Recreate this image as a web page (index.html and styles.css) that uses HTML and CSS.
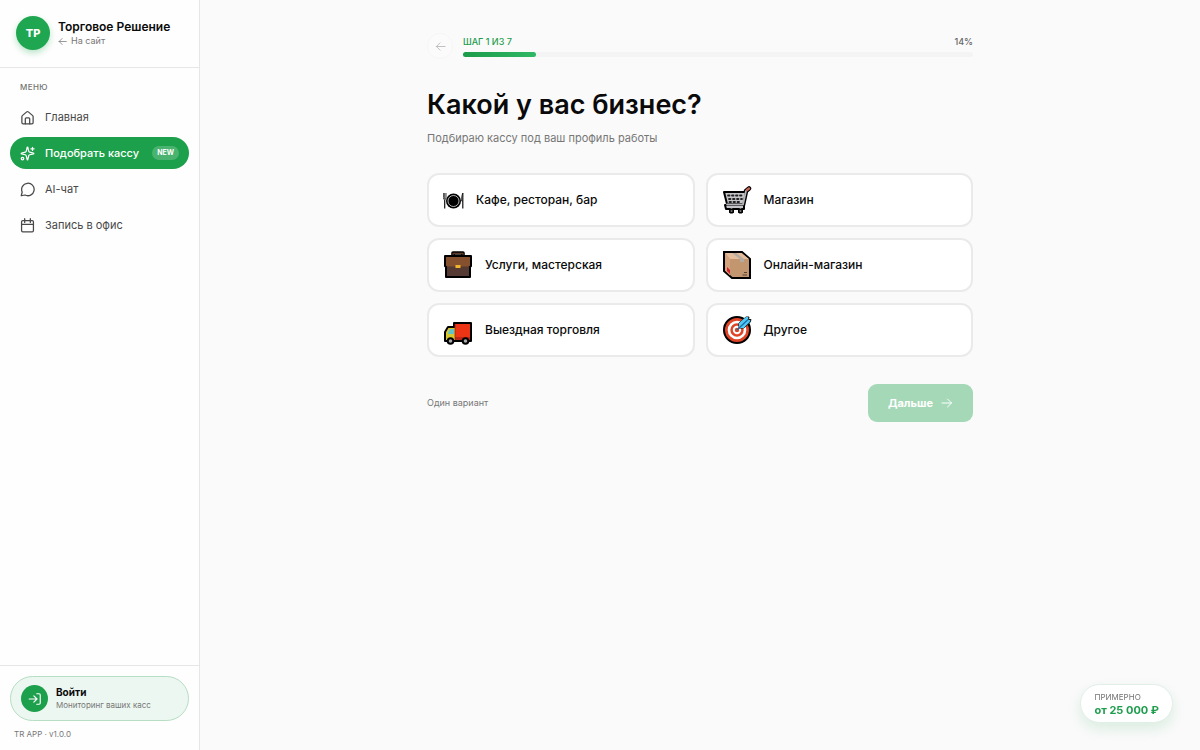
FILE: index.html
```html
<!DOCTYPE html>
<html lang="ru">
  <head>
    <meta charset="UTF-8" />
    <meta name="viewport" content="width=device-width, initial-scale=1" />
    <title>Торговое Решение</title>
    <link rel="stylesheet" href="styles.css">
  </head>
  <body>
    <!-- Боковое меню -->
    <aside class="sidebar">
      <header class="brand">
        <div class="logo">ТР</div>
        <div class="brand-text">
          <strong>Торговое Решение</strong>
          <a href="#">
            <svg class="icon" width="9" height="9" viewBox="0 0 24 24"><path d="M22 12H3M11 4l-8 8 8 8" /></svg>
            На сайт
          </a>
        </div>
      </header>

      <nav class="menu">
        <h2>МЕНЮ</h2>
        <ul>
          <li>
            <a href="#">
              <svg class="icon" width="15" height="15" viewBox="0 0 24 24"><path d="M3 10.5a2 2 0 0 1 .7-1.500l7-6a2 2 0 0 1 2.600 0l7 6a2 2 0 0 1 .7 1.500V20a2 2 0 0 1-2 2H5a2 2 0 0 1-2-2z" /><path d="M8.500 22v-8a1.500 1.500 0 0 1 1.500-1.500h4a1.500 1.500 0 0 1 1.500 1.500v8" /></svg>
              <span>Главная</span>
            </a>
          </li>
          <li>
            <a href="#" class="active" aria-current="page">
              <svg class="icon" width="15" height="15" viewBox="0 0 24 24"><path d="M9.900 15.500A2 2 0 0 0 8.500 14l-6.100-1.500a.5.5 0 0 1 0-1L8.500 9.900a2 2 0 0 0 1.400-1.400l1.600-6.100a.5.5 0 0 1 1 0l1.500 6.100a2 2 0 0 0 1.500 1.400l6.100 1.600a.5.5 0 0 1 0 1L15.500 14a2 2 0 0 0-1.500 1.500l-1.500 6.100a.5.5 0 0 1-1 0z" /><path d="M20 2v5M22.500 4.500h-5" /><circle cx="4" cy="20" r="2" /></svg>
              <span>Подобрать кассу</span>
              <em class="badge">NEW</em>
            </a>
          </li>
          <li>
            <a href="#">
              <svg class="icon" width="15" height="15" viewBox="0 0 24 24"><path d="M2 22l1.500-6A10 10 0 1 1 8 20.800z" /></svg>
              <span>AI-чат</span>
            </a>
          </li>
          <li>
            <a href="#">
              <svg class="icon" width="15" height="15" viewBox="0 0 24 24"><rect x="2.500" y="4" width="19" height="18" rx="2" /><path d="M7.500 1v6M16.500 1v6M2.500 10h19" /></svg>
              <span>Запись в офис</span>
            </a>
          </li>
        </ul>
      </nav>

      <footer class="side-foot">
        <a href="#" class="login">
          <span class="login-icon">
            <svg class="icon" width="14" height="14" viewBox="0 0 24 24"><path d="M2 12h13M10 6.500l5.500 5.500-5.500 5.500M15 3h4a2 2 0 0 1 2 2v14a2 2 0 0 1-2 2h-4" /></svg>
          </span>
          <span class="login-text">
            <strong>Войти</strong>
            <small>Мониторинг ваших касс</small>
          </span>
        </a>
        <p>TR APP · v1.0.0</p>
      </footer>
    </aside>

    <!-- Шаг подбора -->
    <main class="content">
      <div class="quiz">
        <div class="progress">
          <button type="button" class="back" aria-label="Назад" disabled>
            <svg class="icon" width="11" height="11" viewBox="0 0 24 24"><path d="M22 12H3M11 4l-8 8 8 8" /></svg>
          </button>
          <div class="progress-body">
            <div class="progress-head">
              <span class="step">ШАГ 1 ИЗ 7</span>
              <span class="percent">14%</span>
            </div>
            <div class="track"><div class="bar" style="width: 14.28%"></div></div>
          </div>
        </div>

        <h1>Какой у вас бизнес?</h1>
        <p class="lead">Подбираю кассу под ваш профиль работы</p>

        <div class="options">
          <button type="button" class="option">
            <svg width="21" height="22" viewBox="0 0 21 22">
              <circle cx="10.500" cy="12" r="7.500" fill="#000" />
              <circle cx="10.500" cy="12" r="5.500" fill="none" stroke="#ddd" stroke-width=".8" />
              <path d="M1.700 11v8.500M19.800 4v15.500" stroke="#111" stroke-width="1.200" />
              <path d="M.4 4v4.500q0 1.800 1.300 2.500 1.300-.7 1.300-2.500V4M1.700 4v6M19.800 4q-1.600 3-1.200 8h1.200" fill="none" stroke="#111" stroke-width=".8" />
            </svg>
            Кафе, ресторан, бар
          </button>
          <button type="button" class="option">
            <svg width="30" height="30" viewBox="0 0 30 30" stroke-linejoin="round" stroke-linecap="round">
              <path d="M21 20l3-14 3-2.500" fill="none" stroke="#000" stroke-width="4.500" />
              <path d="M2 7h22l-2.500 12H5z" fill="#c5c5c9" stroke="#000" stroke-width="2" />
              <path d="M3 20h19v4h-2v3h-3v-3h-6v3H8v-3H4z" fill="#c5c5c9" stroke="#000" stroke-width="2" />
              <path d="M6 10.500h15M7 14h13M7.500 17h11" fill="none" stroke="#222" stroke-width="1.800" stroke-dasharray="1.500 2.500" />
              <path d="M5 19.500h16l3-13.500" fill="none" stroke="#b5b5ba" stroke-width="1.800" />
              <circle cx="9.500" cy="26" r="1.800" fill="#777" stroke="#000" stroke-width="1.500" />
              <circle cx="18.500" cy="26" r="1.800" fill="#777" stroke="#000" stroke-width="1.500" />
              <path d="M25 5L27 3.500" fill="none" stroke="#c7665d" stroke-width="2.400" />
            </svg>
            Магазин
          </button>
          <button type="button" class="option">
            <svg width="30" height="30" viewBox="0 0 30 30" stroke-linejoin="round">
              <path d="M10 6V3h10v3" fill="none" stroke="#000" stroke-width="3.600" />
              <path d="M10 6V3.300h10V6" fill="none" stroke="#5e3b29" stroke-width="1.200" />
              <path d="M2 6h26v10l-1 1v10H3V17l-1-1z" fill="#543a33" stroke="#000" stroke-width="2" />
              <path d="M3 7h24v8.500l-2 1H5l-2-1z" fill="#85502d" />
              <rect x="12.500" y="15" width="5" height="3" fill="#f0b52e" />
            </svg>
            Услуги, мастерская
          </button>
          <button type="button" class="option">
            <svg width="30" height="30" viewBox="0 0 30 30">
              <path d="M2 2h18l8 7v19H10l-8-7z" fill="#c29770" stroke="#000" stroke-width="2" />
              <path d="M3 3h16.500l7.500 6H8z" fill="#e3bd9c" />
              <path d="M3 3l5 6v16.500L3 20.500z" fill="#d4a27c" />
              <path d="M10 3h4l8 6v3h-4V9z" fill="#b3aaa2" />
              <path d="M5 17l3 3v4l-3-3z" fill="#d5202d" />
              <path d="M22 22.500h3M20.500 25h4.500" stroke="#5a4333" stroke-width="1" />
            </svg>
            Онлайн-магазин
          </button>
          <button type="button" class="option">
            <svg width="30" height="30" viewBox="0 0 30 30" stroke-linejoin="round">
              <path d="M2 26v-9l3-5h6V8h17v18z" fill="#ed3415" stroke="#000" stroke-width="2" />
              <path d="M3 25v-7.500l2.500-4.500H12v12z" fill="#d7c92d" />
              <path d="M5 18l2-4h4v5H5z" fill="#63c3cb" />
              <path d="M12 22h15v3H12z" fill="#b92816" />
              <path d="M12 9v16" stroke="#8d2a12" stroke-width=".8" />
              <circle cx="7.500" cy="26" r="2.800" fill="#aaa" stroke="#000" stroke-width="2" />
              <circle cx="22.500" cy="26" r="2.800" fill="#aaa" stroke="#000" stroke-width="2" />
            </svg>
            Выездная торговля
          </button>
          <button type="button" class="option">
            <svg width="30" height="30" viewBox="0 0 30 30" stroke-linejoin="round">
              <circle cx="15" cy="15" r="13" fill="#df4426" stroke="#000" stroke-width="2" />
              <circle cx="15" cy="15" r="8" fill="#df4426" stroke="#fff" stroke-width="2.600" />
              <circle cx="15" cy="15" r="3.200" fill="#df4426" stroke="#fff" stroke-width="2" />
              <path d="M17 13V8l7-6h3l-.5 2.500H29l-1 3-6 5.500z" fill="#40bff0" stroke="#111" stroke-width="1" />
              <path d="M17 13V8l7-6h2v3h2l-6 8z" fill="#50c8f4" />
              <path d="M15 15L26 4.500" stroke="#176ba5" stroke-width="1.200" />
            </svg>
            Другое
          </button>
        </div>

        <div class="actions">
          <span>Один вариант</span>
          <button type="button" class="next" disabled>
            Дальше
            <svg class="icon" width="12" height="12" viewBox="0 0 24 24"><path d="M2 12h19M13 4l8 8-8 8" /></svg>
          </button>
        </div>
      </div>
    </main>

    <!-- Примерная цена поверх страницы -->
    <div class="price">
      <small>ПРИМЕРНО</small>
      <strong>от 25 000 ₽</strong>
    </div>
  </body>
</html>
```
FILE: styles.css
```css
/* Сброс */
* {
  box-sizing: border-box;
}
body,
h1,
h2,
p,
ul {
  margin: 0;
  padding: 0;
}
ul {
  list-style: none;
}
a {
  color: inherit;
  text-decoration: none;
}
button {
  font: inherit;
  color: inherit;
}

body {
  display: flex;
  min-height: 100vh;
  background-color: #fafafa;
  color: #0a0a0a;
  font-family: Inter, "Open Sans", sans-serif;
  font-size: 12px;
  line-height: 16px;
}
.icon {
  flex: none;
  fill: none;
  stroke: currentColor;
  stroke-width: 2;
  stroke-linecap: round;
  stroke-linejoin: round;
}

/* Боковая панель */
.sidebar {
  position: sticky;
  top: 0;
  display: flex;
  flex-direction: column;
  flex: none;
  width: 200px;
  height: 100vh;
  background-color: #fefefe;
  border-right: 1px solid #e6e6e6;
}
.brand {
  display: flex;
  align-items: center;
  gap: 8px;
  padding: 16px 16px 17px;
  border-bottom: 1px solid #e6e6e6;
}
.logo {
  width: 34px;
  height: 34px;
  border-radius: 50%;
  background-color: #1fa650;
  box-shadow: 0 3px 6px rgba(31, 166, 80, 0.3);
  color: #fff;
  font-size: 11px;
  font-weight: 800;
  line-height: 34px;
  text-align: center;
}
.brand-text strong {
  display: block;
  font-size: 12px;
  font-weight: 600;
  line-height: 16px;
  white-space: nowrap;
}
.brand-text a {
  display: flex;
  align-items: center;
  gap: 4px;
  color: #777;
  font-size: 9px;
  line-height: 12px;
}

/* Меню */
.menu {
  flex: 1;
  padding: 11px 10px;
}
.menu h2 {
  padding: 0 10px;
  margin-bottom: 6px;
  color: #737373;
  font-size: 8px;
  font-weight: 500;
  line-height: 16px;
  letter-spacing: 0.05em;
}
.menu ul {
  display: grid;
  gap: 4px;
}
.menu li a {
  display: flex;
  align-items: center;
  gap: 10px;
  height: 32px;
  padding: 0 10px;
  border-radius: 16px;
  color: #484848;
  font-size: 11px;
  white-space: nowrap;
}
.menu li a:hover {
  background-color: #f3f3f3;
}
.menu li a.active {
  background-color: #1da04c;
  color: #fff;
  font-weight: 500;
}
.badge {
  margin-left: auto;
  padding: 0 5px;
  border-radius: 7px;
  background-color: rgba(255, 255, 255, 0.2);
  font-size: 7px;
  font-style: normal;
  font-weight: 700;
  line-height: 14px;
}

/* Низ панели */
.side-foot {
  padding: 10px;
  border-top: 1px solid #e6e6e6;
}
.login {
  display: flex;
  align-items: center;
  gap: 8px;
  height: 45px;
  padding: 0 10px;
  border: 1px solid #b5dec4;
  border-radius: 23px;
  background-color: #edf7f1;
}
.login-icon {
  display: grid;
  place-items: center;
  width: 27px;
  height: 27px;
  border-radius: 50%;
  background-color: #1da04c;
  color: #fff;
}
.login-text strong,
.login-text small {
  display: block;
  white-space: nowrap;
}
.login-text strong {
  font-size: 10px;
  line-height: 13px;
}
.login-text small {
  color: #777;
  font-size: 8px;
  line-height: 12px;
}
.side-foot p {
  padding: 7px 4px 0;
  color: #777;
  font-size: 8px;
  line-height: 12px;
}

/* Основная часть */
.content {
  flex: 1;
  padding: 33px 24px;
}
.quiz {
  max-width: 546px;
  margin: 0 auto;
}
.progress {
  display: flex;
  align-items: center;
  gap: 10px;
}
.back {
  display: grid;
  place-items: center;
  width: 26px;
  height: 26px;
  padding: 0;
  border: 1px solid #f6f6f6;
  border-radius: 50%;
  background-color: #fbfbfb;
  color: #bbb;
}
.progress-body {
  flex: 1;
}
.progress-head {
  display: flex;
  justify-content: space-between;
  margin-bottom: 3px;
  font-size: 9px;
  font-weight: 500;
  line-height: 14px;
}
.step {
  color: #1f9d4d;
}
.percent {
  color: #666;
}
.track {
  height: 5px;
  border-radius: 3px;
  background-color: #f4f4f4;
}
.bar {
  height: 100%;
  border-radius: 3px;
  background: linear-gradient(90deg, #1c9c49, #2fb866);
}
h1 {
  margin-top: 28px;
  font-size: 27px;
  font-weight: 600;
  line-height: 36px;
}
.lead {
  margin-top: 6px;
  color: #777;
  font-size: 11px;
  line-height: 18px;
}

/* Варианты ответа */
.options {
  display: grid;
  grid-template-columns: 1fr 1fr;
  gap: 11px;
  margin-top: 26px;
}
.option {
  display: flex;
  align-items: center;
  gap: 12px;
  height: 54px;
  padding: 0 14px;
  border: 2px solid #eaeaea;
  border-radius: 12px;
  background-color: #fff;
  font-weight: 500;
  text-align: left;
  cursor: pointer;
}
.option:hover {
  border-color: #a5d6b7;
}

/* Кнопка дальше */
.actions {
  display: flex;
  align-items: center;
  justify-content: space-between;
  margin-top: 27px;
  color: #777;
  font-size: 9px;
}
.next {
  display: flex;
  align-items: center;
  gap: 8px;
  height: 38px;
  padding: 0 20px;
  border: 0;
  border-radius: 9px;
  background-color: #a4d8b6;
  color: #fff;
  font-size: 11px;
  font-weight: 700;
}

/* Плашка с ценой */
.price {
  position: fixed;
  right: 27px;
  bottom: 27px;
  padding: 7px 13px 5px;
  border: 1px solid #e1eee6;
  border-radius: 20px;
  background-color: #fff;
  box-shadow: 0 6px 14px rgba(29, 160, 76, 0.14);
}
.price small,
.price strong {
  display: block;
}
.price small {
  color: #737373;
  font-size: 8px;
  line-height: 11px;
}
.price strong {
  color: #1f9d4d;
  font-size: 11px;
  line-height: 14px;
}
```
